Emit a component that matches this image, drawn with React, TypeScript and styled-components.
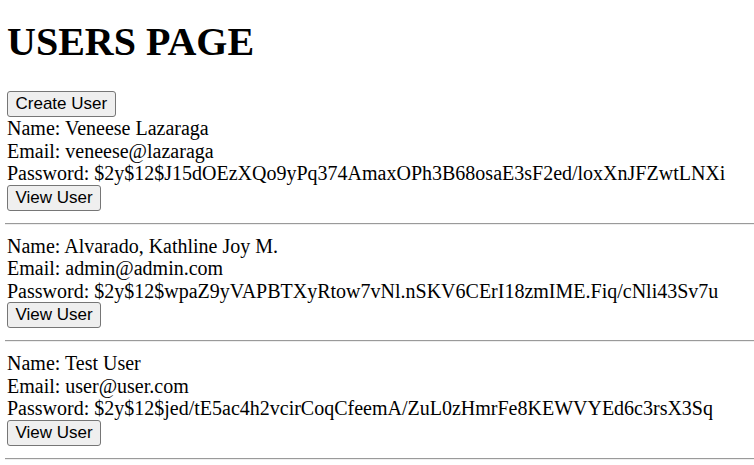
import React from "react";
import styled, { createGlobalStyle } from "styled-components";

const Global = createGlobalStyle`
  html, body { margin: 0; padding: 0; background: #fff; }
  body {
    padding: 0 0 0 7px;
    font-family: "Liberation Serif", "Times New Roman", serif;
    font-size: 20px;
    color: #000;
  }
`;

const Title = styled.h1`
  font-size: 40px;
  font-weight: bold;
  margin: 19px 0 26px 0;
  line-height: 46px;
`;

const Button = styled.button`
  font-family: "Liberation Sans", Arial, sans-serif;
  font-size: 17px;
  background: #efefef;
  color: #000;
  border: 1px solid #767676;
  border-radius: 3px;
  padding: 0 7.5px;
  height: 26px;
  line-height: 22px;
  display: block;
  margin: 0;
`;

const UserBlock = styled.div`
  line-height: 22.5px;
`;

const Line = styled.div``;

const Rule = styled.hr`
  border: none;
  border-top: 1px solid #9a9a9a;
  border-bottom: 1px solid #eeeeee;
  margin: 12px 0 10px -2px;
`;

const users = [
  {
    name: "Veneese Lazaraga",
    email: "veneese@lazaraga",
    password: "$2y$12$J15dOEzXQo9yPq374AmaxOPh3B68osaE3sF2ed/loxXnJFZwtLNXi",
  },
  {
    name: "Alvarado, Kathline Joy M.",
    email: "admin@admin.com",
    password: "$2y$12$wpaZ9yVAPBTXyRtow7vNl.nSKV6CErI18zmIME.Fiq/cNli43Sv7u",
  },
  {
    name: "Test User",
    email: "user@user.com",
    password: "$2y$12$jed/tE5ac4h2vcirCoqCfeemA/ZuL0zHmrFe8KEWVYEd6c3rsX3Sq",
  },
];

export default function App() {
  return (
    <>
      <Global />
      <Title>USERS PAGE</Title>
      <Button>Create User</Button>
      {users.map((u) => (
        <UserBlock key={u.email}>
          <Line>Name: {u.name}</Line>
          <Line>Email: {u.email}</Line>
          <Line>Password: {u.password}</Line>
          <Button>View User</Button>
          <Rule />
        </UserBlock>
      ))}
    </>
  );
}
